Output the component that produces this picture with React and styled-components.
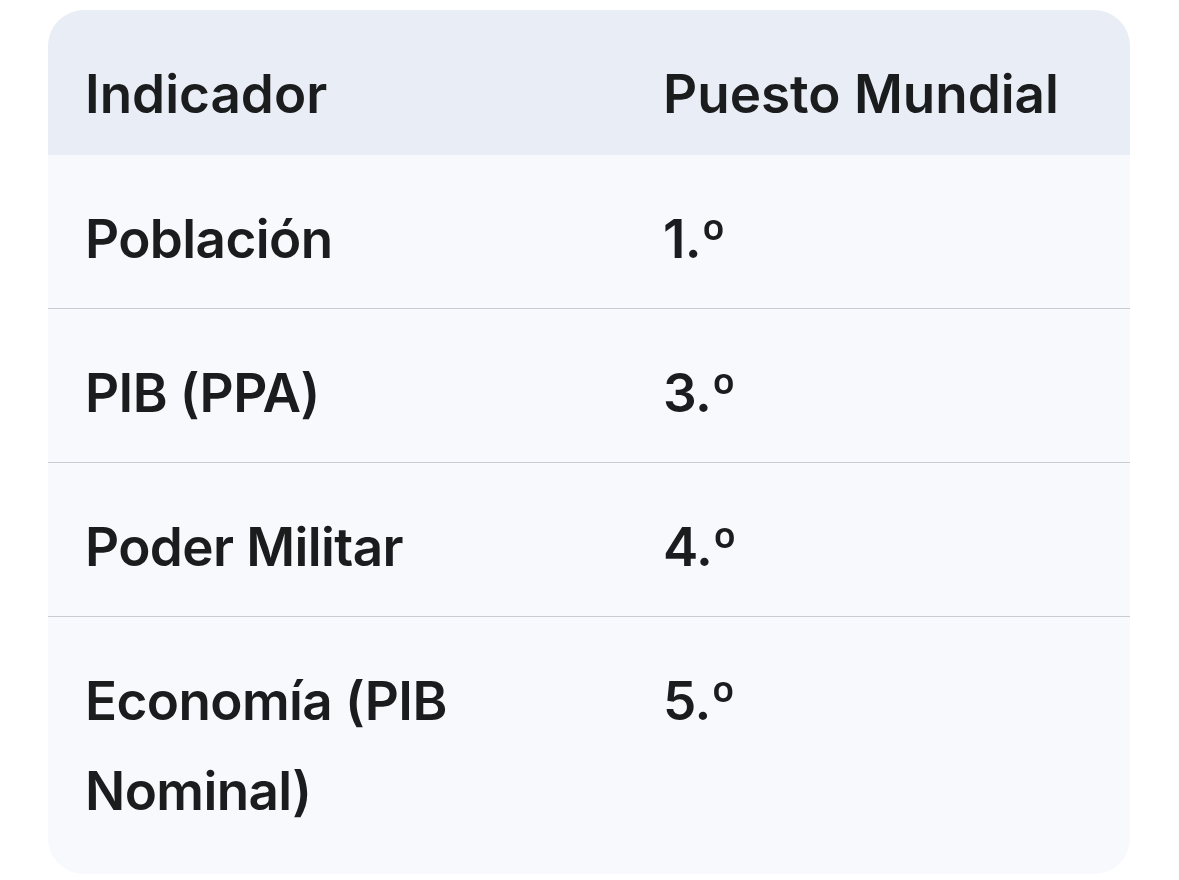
import React from 'react';
import styled, { createGlobalStyle } from 'styled-components';

const GlobalStyle = createGlobalStyle`
  html, body {
    margin: 0;
    padding: 0;
    background: #ffffff;
  }
  body {
    font-family: Inter, "Noto Sans", "Liberation Sans", sans-serif;
    color: #1b1c1e;
  }
`;

const Page = styled.div`
  padding: 10px 49px 0 48px;
`;

const Card = styled.div`
  background: #f8f9fd;
  border-radius: 36px;
  overflow: hidden;
  padding-bottom: 14px;
`;

const Table = styled.table`
  width: 100%;
  border-collapse: collapse;
  table-layout: fixed;
`;

const Col = styled.col`
  width: ${(p) => p.$width};
`;

const HeadRow = styled.tr`
  background: #e9eef6;
`;

const HeadCell = styled.th`
  text-align: left;
  font-weight: 600;
  font-size: 53px;
  line-height: 90px;
  padding: 39px 36px 16px 37px;
  vertical-align: top;
  color: #1b1c1e;
`;

const Row = styled.tr`
  border-top: ${(p) => (p.$first ? 'none' : '1px solid #c9ccd2')};
`;

const Cell = styled.td`
  font-weight: 600;
  font-size: 53px;
  line-height: 90px;
  letter-spacing: -0.6px;
  padding: 39px 36px 24px 37px;
  vertical-align: top;
  color: #1b1c1e;
`;

const rows = [
  { name: 'Población', rank: '1.º' },
  { name: 'PIB (PPA)', rank: '3.º' },
  { name: 'Poder Militar', rank: '4.º' },
  { name: 'Economía (PIB Nominal)', rank: '5.º' },
];

const App = () => (
  <>
    <GlobalStyle />
    <Page>
      <Card>
        <Table>
          <colgroup>
            <Col $width="578px" />
            <Col $width="auto" />
          </colgroup>
          <thead>
            <HeadRow>
              <HeadCell>Indicador</HeadCell>
              <HeadCell>Puesto Mundial</HeadCell>
            </HeadRow>
          </thead>
          <tbody>
            {rows.map((r, i) => (
              <Row key={r.name} $first={i === 0}>
                <Cell>{r.name}</Cell>
                <Cell>{r.rank}</Cell>
              </Row>
            ))}
          </tbody>
        </Table>
      </Card>
    </Page>
  </>
);

export default App;
